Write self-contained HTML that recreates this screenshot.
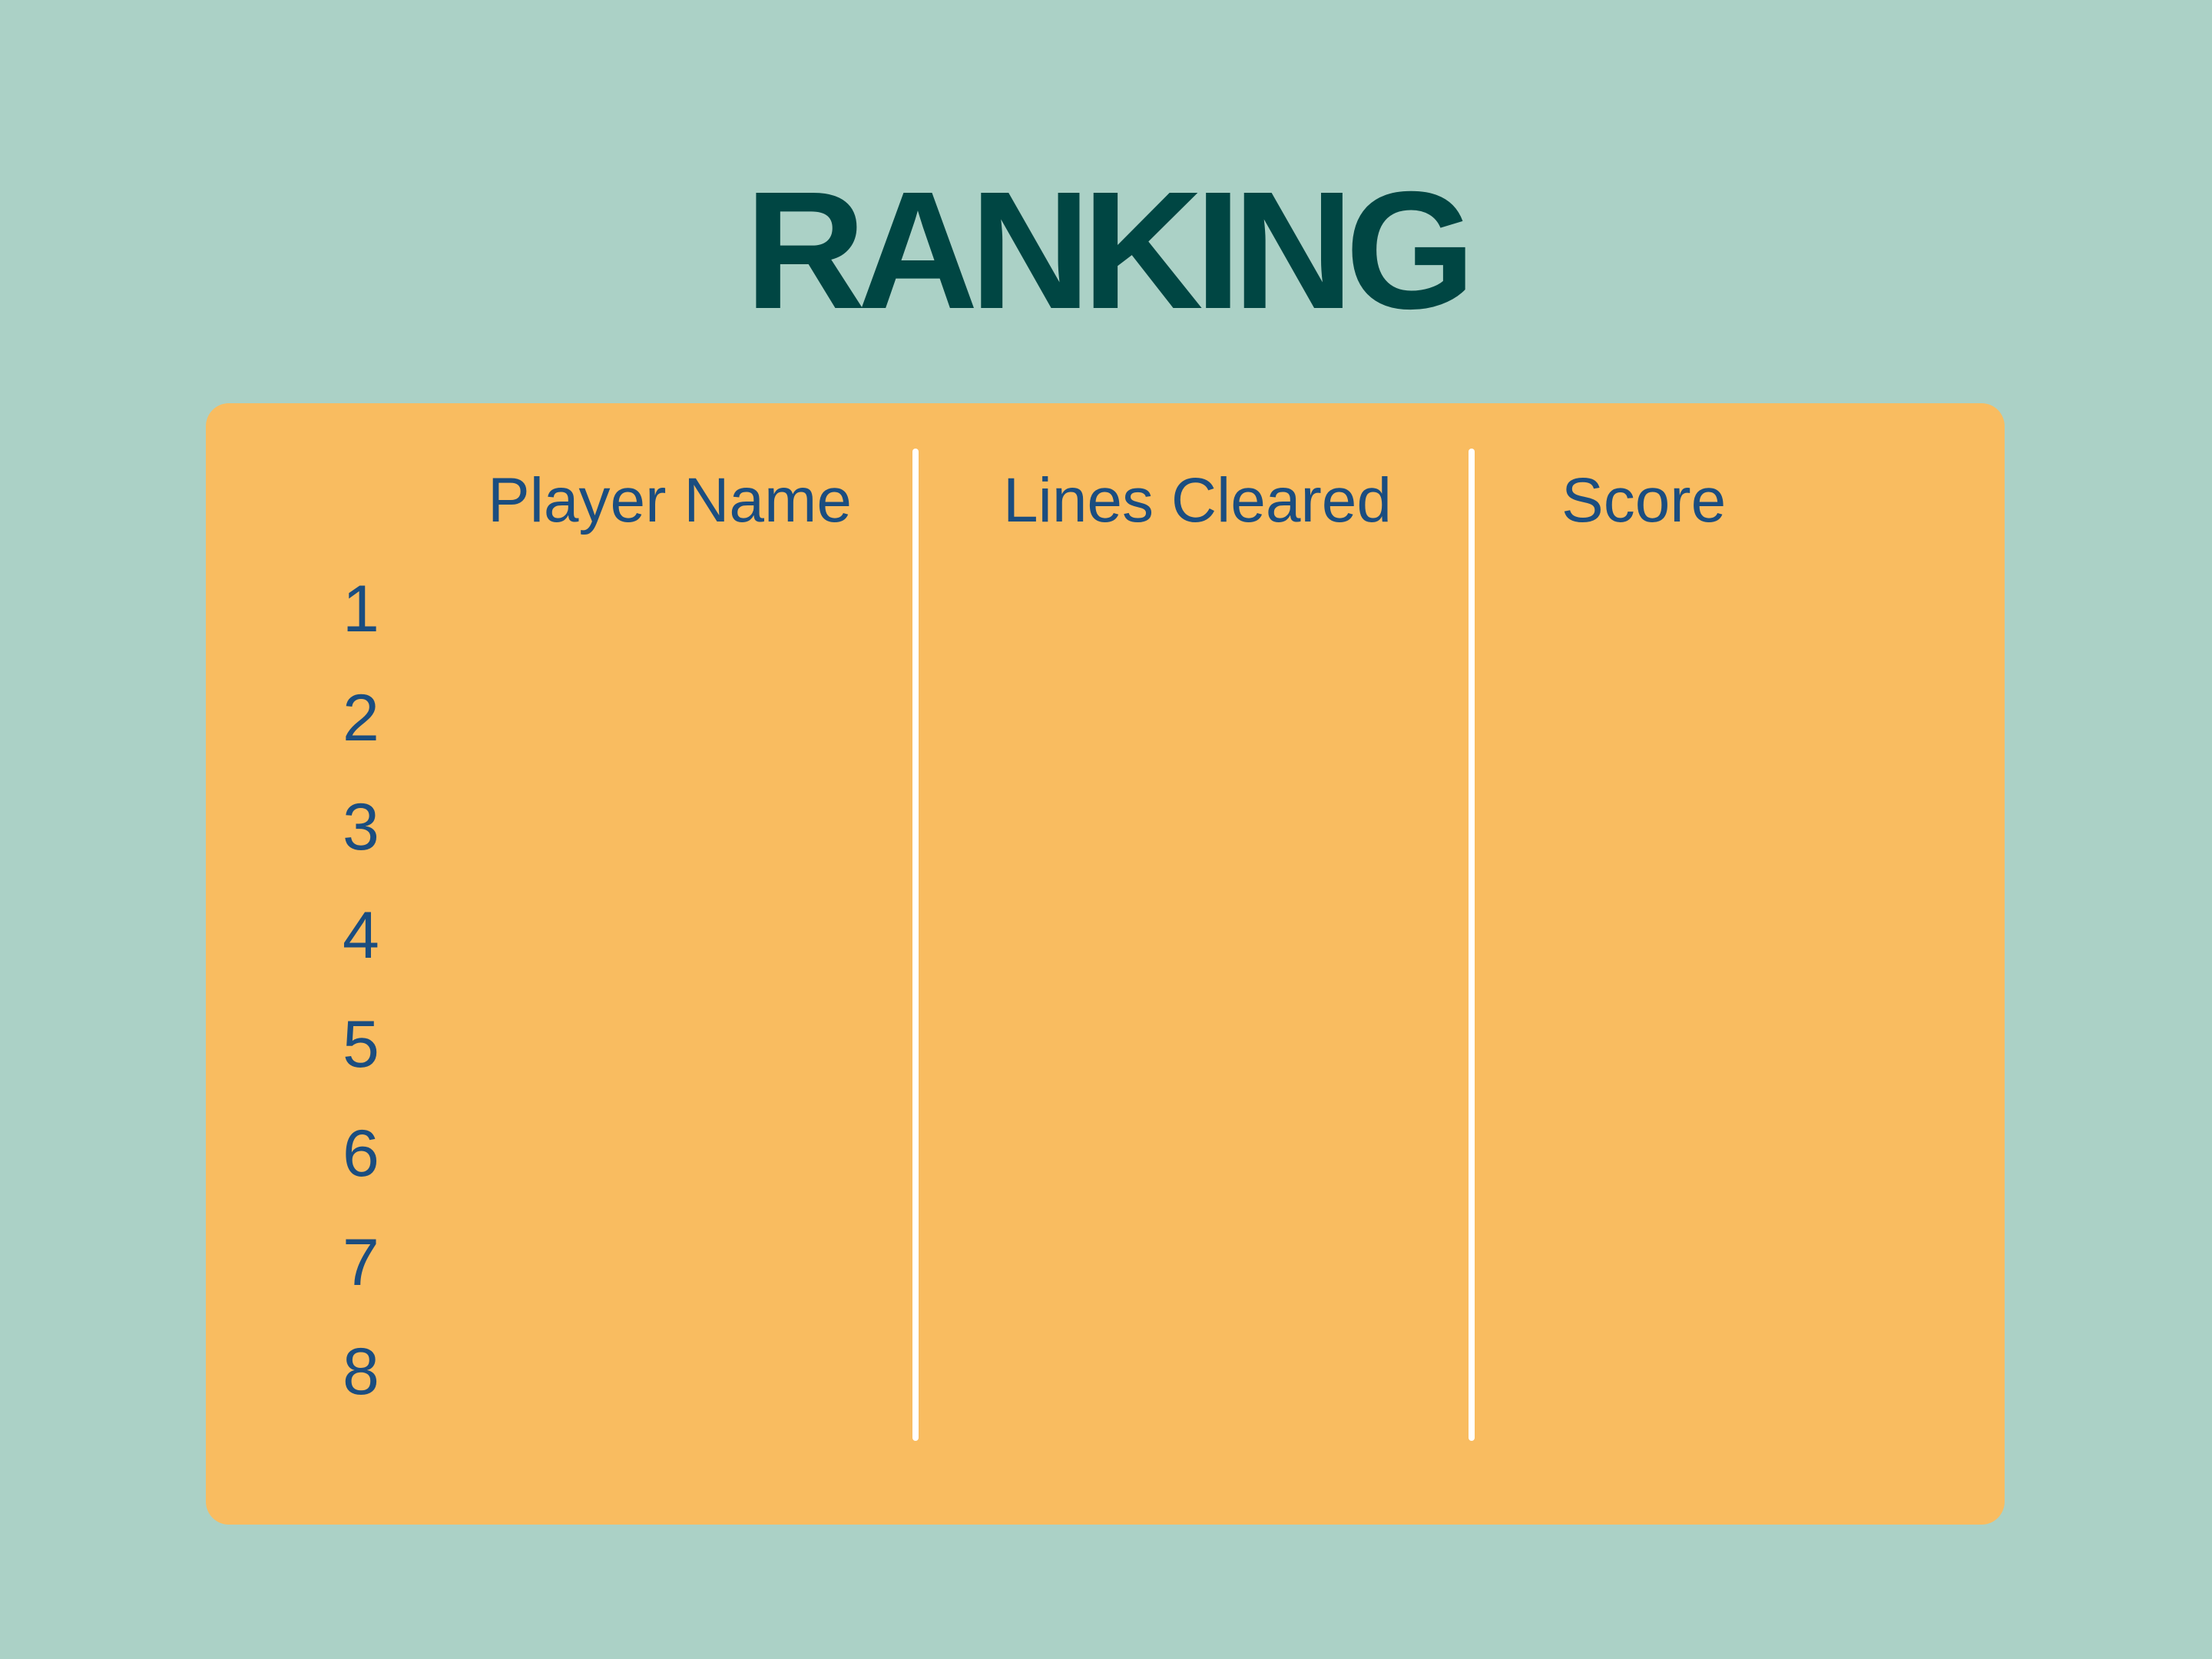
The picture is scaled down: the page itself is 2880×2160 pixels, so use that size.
<!DOCTYPE html>
<html><head><meta charset="utf-8"><style>
html,body{margin:0;padding:0}
body{width:2880px;height:2160px;background:#abd1c6;position:relative;overflow:hidden;font-family:"Liberation Sans",sans-serif}
.t{position:absolute;line-height:1;white-space:nowrap}
#title{left:0;width:2880px;text-align:center;top:218px;font-size:218px;font-weight:bold;color:#004643;letter-spacing:-11px}
#card{position:absolute;left:268px;top:525px;width:2342px;height:1460px;background:#f9bc60;border-radius:30px}
.div{position:absolute;width:8px;top:584px;height:1292px;background:#fff;border-radius:4px}
.h{top:611px;font-size:82px;color:#1b4d7f}
.n{left:446px;font-size:86px;color:#1b4d7f}
</style></head><body>
<div id="title" class="t">RANKING</div>
<div id="card"></div>
<div class="div" style="left:1188px"></div>
<div class="div" style="left:1912px"></div>
<div class="t h" style="left:635px">Player Name</div>
<div class="t h" style="left:1306px">Lines Cleared</div>
<div class="t h" style="left:2033px">Score</div>
<div class="t n" style="top:750px">1</div>
<div class="t n" style="top:892px">2</div>
<div class="t n" style="top:1034px">3</div>
<div class="t n" style="top:1175px">4</div>
<div class="t n" style="top:1317px">5</div>
<div class="t n" style="top:1459px">6</div>
<div class="t n" style="top:1601px">7</div>
<div class="t n" style="top:1743px">8</div>
</body></html>
